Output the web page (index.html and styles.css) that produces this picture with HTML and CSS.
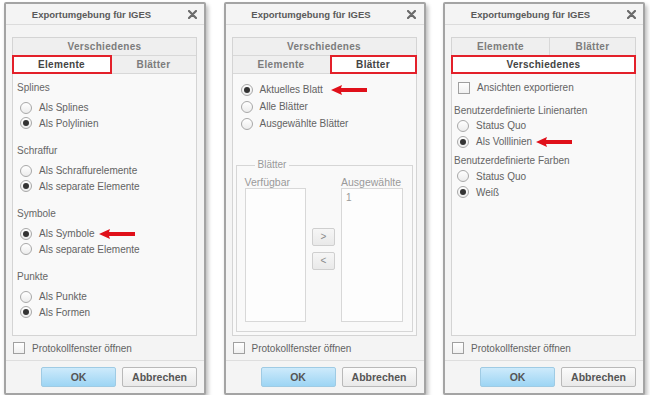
FILE: index.html
```html
<!DOCTYPE html>
<html lang="de">
<head>
    <meta charset="UTF-8">
    <title>Exportumgebung für IGES</title>
    <link rel="stylesheet" href="styles.css">
</head>
<body>
<div class="page">

    <!-- Dialog 1: Elemente -->
    <div class="dialog">
        <div class="titlebar">
            <span class="title">Exportumgebung für IGES</span>
            <span class="close"><svg width="9" height="9" viewBox="0 0 9 9"><path d="M1 1L8 8M8 1L1 8" stroke="#6b6b6b" stroke-width="2.2" stroke-linecap="round"/></svg></span>
        </div>
        <div class="body">
            <div class="tabbox">
                <div class="tabrow"><div class="tab">Verschiedenes</div></div>
                <div class="tabrow">
                    <div class="tab tab-left active">Elemente</div>
                    <div class="tab">Blätter</div>
                </div>
                <div class="content content-elemente">
                    <div class="section">
                        <div class="group-label">Splines</div>
                        <div class="radio-list">
                            <div class="radio-row"><span class="radio"></span>Als Splines</div>
                            <div class="radio-row"><span class="radio checked"></span>Als Polylinien</div>
                        </div>
                    </div>
                    <div class="section">
                        <div class="group-label">Schraffur</div>
                        <div class="radio-list">
                            <div class="radio-row"><span class="radio"></span>Als Schraffurelemente</div>
                            <div class="radio-row"><span class="radio checked"></span>Als separate Elemente</div>
                        </div>
                    </div>
                    <div class="section">
                        <div class="group-label">Symbole</div>
                        <div class="radio-list">
                            <div class="radio-row"><span class="radio checked"></span>Als Symbole
                                <svg class="arrow arrow-near" width="36" height="10" viewBox="0 0 36 10"><polygon points="0,5 11,0 10,3 36,3 36,7 10,7 11,10" fill="#e0101a"/></svg>
                            </div>
                            <div class="radio-row"><span class="radio"></span>Als separate Elemente</div>
                        </div>
                    </div>
                    <div class="section">
                        <div class="group-label">Punkte</div>
                        <div class="radio-list">
                            <div class="radio-row"><span class="radio"></span>Als Punkte</div>
                            <div class="radio-row"><span class="radio checked"></span>Als Formen</div>
                        </div>
                    </div>
                </div>
            </div>
            <div class="check-row"><span class="checkbox"></span>Protokollfenster öffnen</div>
        </div>
        <div class="footer">
            <button class="btn btn-ok">OK</button>
            <button class="btn">Abbrechen</button>
        </div>
    </div>

    <!-- Dialog 2: Blätter -->
    <div class="dialog">
        <div class="titlebar">
            <span class="title">Exportumgebung für IGES</span>
            <span class="close"><svg width="9" height="9" viewBox="0 0 9 9"><path d="M1 1L8 8M8 1L1 8" stroke="#6b6b6b" stroke-width="2.2" stroke-linecap="round"/></svg></span>
        </div>
        <div class="body">
            <div class="tabbox">
                <div class="tabrow"><div class="tab">Verschiedenes</div></div>
                <div class="tabrow">
                    <div class="tab tab-left">Elemente</div>
                    <div class="tab active">Blätter</div>
                </div>
                <div class="content content-blaetter">
                    <div class="radio-list tall">
                        <div class="radio-row"><span class="radio checked"></span>Aktuelles Blatt
                            <svg class="arrow arrow-far" width="36" height="10" viewBox="0 0 36 10"><polygon points="0,5 11,0 10,3 36,3 36,7 10,7 11,10" fill="#e0101a"/></svg>
                        </div>
                        <div class="radio-row"><span class="radio"></span>Alle Blätter</div>
                        <div class="radio-row"><span class="radio"></span>Ausgewählte Blätter</div>
                    </div>
                    <fieldset class="sheets">
                        <legend>Blätter</legend>
                        <div class="lists">
                            <div class="list-label">Verfügbar</div>
                            <div></div>
                            <div class="list-label">Ausgewählte</div>
                            <div class="listbox"></div>
                            <div class="move-buttons">
                                <span class="move">&gt;</span>
                                <span class="move">&lt;</span>
                            </div>
                            <div class="listbox"><div class="list-item">1</div></div>
                        </div>
                    </fieldset>
                </div>
            </div>
            <div class="check-row"><span class="checkbox"></span>Protokollfenster öffnen</div>
        </div>
        <div class="footer">
            <button class="btn btn-ok">OK</button>
            <button class="btn">Abbrechen</button>
        </div>
    </div>

    <!-- Dialog 3: Verschiedenes -->
    <div class="dialog">
        <div class="titlebar">
            <span class="title">Exportumgebung für IGES</span>
            <span class="close"><svg width="9" height="9" viewBox="0 0 9 9"><path d="M1 1L8 8M8 1L1 8" stroke="#6b6b6b" stroke-width="2.2" stroke-linecap="round"/></svg></span>
        </div>
        <div class="body">
            <div class="tabbox">
                <div class="tabrow">
                    <div class="tab tab-left">Elemente</div>
                    <div class="tab">Blätter</div>
                </div>
                <div class="tabrow"><div class="tab active">Verschiedenes</div></div>
                <div class="content content-misc">
                    <div class="check-line"><span class="checkbox"></span>Ansichten exportieren</div>
                    <div class="group-label gl-first">Benutzerdefinierte Linienarten</div>
                    <div class="radio-list">
                        <div class="radio-row"><span class="radio"></span>Status Quo</div>
                        <div class="radio-row"><span class="radio checked"></span>Als Volllinien
                            <svg class="arrow arrow-near" width="36" height="10" viewBox="0 0 36 10"><polygon points="0,5 11,0 10,3 36,3 36,7 10,7 11,10" fill="#e0101a"/></svg>
                        </div>
                    </div>
                    <div class="group-label gl-next">Benutzerdefinierte Farben</div>
                    <div class="radio-list">
                        <div class="radio-row"><span class="radio"></span>Status Quo</div>
                        <div class="radio-row"><span class="radio checked"></span>Weiß</div>
                    </div>
                </div>
            </div>
            <div class="check-row"><span class="checkbox"></span>Protokollfenster öffnen</div>
        </div>
        <div class="footer">
            <button class="btn btn-ok">OK</button>
            <button class="btn">Abbrechen</button>
        </div>
    </div>

</div>
</body>
</html>
```

FILE: styles.css
```css
body {
    margin: 0;
    background: #ffffff;
    font-family: "Liberation Sans", Arial, sans-serif;
    font-size: 10px;
    color: #636363;
}
.page {
    display: flex;
    justify-content: space-between;
    padding: 2px 5px 0 4px;
    width: 650px;
    box-sizing: border-box;
}
.dialog {
    width: 202px;
    height: 393px;
    box-sizing: border-box;
    border: 2px solid #a4a4a4;
    border-radius: 2px;
    background: #f4f4f4;
    box-shadow: 2px 3px 4px rgba(0,0,0,0.28);
    display: flex;
    flex-direction: column;
}
.titlebar {
    height: 20px;
    display: flex;
    align-items: center;
    border-bottom: 1px solid #dcdcdc;
    padding: 0 5px 0 4px;
}
.title {
    flex: 1;
    text-align: center;
    font-weight: bold;
    font-size: 9.5px;
    color: #5a5a5a;
    padding-right: 12px;
}
.close {
    width: 14px;
    display: flex;
    justify-content: center;
}
.body {
    flex: 1;
    display: flex;
    flex-direction: column;
    padding: 12px 7px 0 6px;
    min-height: 0;
}
.tabbox {
    flex: 1;
    display: flex;
    flex-direction: column;
    border: 1px solid #d4d4d4;
    background: #f9f9f9;
    min-height: 0;
}
.tabrow {
    display: flex;
    height: 17px;
    border-bottom: 1px solid #d8d8d8;
    background: #efefef;
}
.tab {
    flex: 1;
    display: flex;
    align-items: center;
    justify-content: center;
    font-weight: bold;
    color: #7c7c7c;
    letter-spacing: 0.3px;
}
.tab-left {
    flex: 0 0 97px;
    border-right: 1px solid #d8d8d8;
}
.tab.active {
    background: #ffffff;
    color: #444;
    outline: 2px solid #e3202a;
    outline-offset: -1px;
    position: relative;
}
.content {
    flex: 1;
    display: flex;
    flex-direction: column;
}
.content-elemente {
    padding: 6px 0 0 4px;
}
.section + .section {
    margin-top: 12px;
}
.group-label {
    line-height: 15px;
    color: #666;
}
.radio-list {
    margin-top: 5px;
}
.radio-row {
    display: flex;
    align-items: center;
    height: 15.5px;
    padding-left: 3px;
}
.radio {
    width: 12px;
    height: 12px;
    box-sizing: border-box;
    border: 1px solid #a8a8a8;
    border-radius: 50%;
    background: linear-gradient(#ffffff, #ececec);
    margin-right: 7px;
    display: flex;
    align-items: center;
    justify-content: center;
}
.radio.checked::after {
    content: "";
    width: 6px;
    height: 6px;
    border-radius: 50%;
    background: #333;
}
.arrow {
    margin-left: 4px;
}
.arrow-far {
    margin-left: 8px;
}
.content-blaetter {
    padding: 7px 3px 3px 3px;
}
.radio-list.tall {
    margin-top: 0;
}
.radio-list.tall .radio-row {
    height: 17px;
    padding-left: 5px;
}
.sheets {
    flex: 1;
    margin: 27px 0 0 0;
    padding: 5px 9px 9px 8px;
    border: 1px solid #d6d6d6;
    display: flex;
    flex-direction: column;
    min-width: 0;
}
.sheets legend {
    padding: 0 3px;
    margin-left: 10px;
    color: #9a9a9a;
    line-height: 12px;
}
.lists {
    flex: 1;
    display: grid;
    grid-template-columns: 1fr 23px 1fr;
    grid-template-rows: 12px 1fr;
    column-gap: 6px;
}
.list-label {
    color: #9a9a9a;
    font-size: 10.5px;
    line-height: 12px;
}
.listbox {
    background: #fdfdfd;
    border: 1px solid #d8d8d8;
}
.list-item {
    color: #9a9a9a;
    padding: 3px 4px;
}
.move-buttons {
    display: flex;
    flex-direction: column;
    justify-content: center;
    gap: 6px;
    padding-bottom: 13px;
}
.move {
    height: 18px;
    box-sizing: border-box;
    border: 1px solid #cfcfcf;
    border-radius: 2px;
    background: linear-gradient(#f6f6f6, #e9e9e9);
    color: #8a8a8a;
    display: flex;
    align-items: center;
    justify-content: center;
}
.content-misc {
    padding: 6px 0 0 2px;
}
.check-line {
    display: flex;
    align-items: center;
    height: 15px;
    padding-left: 4px;
}
.content-misc .radio-list {
    margin-top: 0;
}
.content-misc .radio-row {
    height: 16px;
    padding-left: 3px;
}
.gl-first {
    margin-top: 7.5px;
}
.gl-next {
    margin-top: 3.5px;
}
.checkbox {
    width: 12px;
    height: 12px;
    box-sizing: border-box;
    border: 1px solid #a0a0a0;
    background: linear-gradient(#ffffff, #f0f0f0);
    margin-right: 7px;
}
.check-row {
    height: 24px;
    display: flex;
    align-items: center;
    padding-left: 1px;
}
.footer {
    height: 32px;
    border-top: 1px solid #dedede;
    display: flex;
    align-items: center;
    justify-content: flex-end;
    gap: 6px;
    padding-right: 7px;
}
.btn {
    height: 20px;
    width: 75px;
    font-family: "Liberation Sans", Arial, sans-serif;
    font-size: 10.5px;
    font-weight: bold;
    color: #555;
    border: 1px solid #b9b9b9;
    border-radius: 2px;
    background: linear-gradient(#fbfbfb, #e9e9e9);
    padding: 0;
}
.btn-ok {
    border-color: #9fcbe4;
    background: linear-gradient(#cdeafb, #9dd5f4);
}
```
